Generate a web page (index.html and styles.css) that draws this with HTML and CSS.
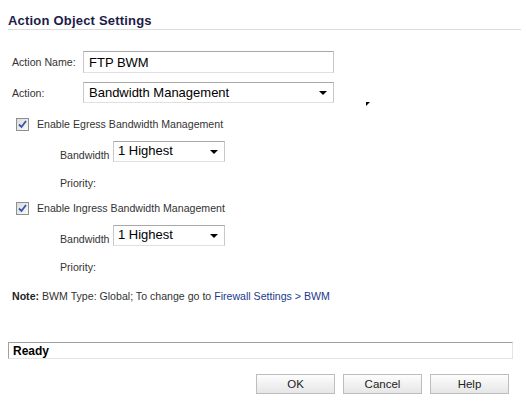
FILE: index.html
```html
<!DOCTYPE html>
<html>
<head>
<meta charset="utf-8">
<link rel="stylesheet" href="styles.css">
</head>
<body>
<div class="page">
  <div class="title"><span>Action Object Settings</span></div>
  <div class="form">
    <div class="row r1">
      <span class="label">Action Name:</span>
      <div class="field wide">FTP BWM</div>
    </div>
    <div class="row r2">
      <span class="label">Action:</span>
      <div class="field wide select">Bandwidth Management<span class="arrow"></span></div>
    </div>
    <div class="row check r3">
      <span class="cb"><svg width="9" height="9" viewBox="0 0 9 9"><path d="M1 4.5 L3.5 7 L8 1" fill="none" stroke="#3a55a8" stroke-width="1.8"/></svg></span>
      <span>Enable Egress Bandwidth Management</span>
    </div>
    <div class="row sub r4">
      <span class="sublabel">Bandwidth</span>
      <div class="field small select">1 Highest<span class="arrow"></span></div>
    </div>
    <div class="row sub plain r5"><span>Priority:</span></div>
    <div class="row check r6">
      <span class="cb"><svg width="9" height="9" viewBox="0 0 9 9"><path d="M1 4.5 L3.5 7 L8 1" fill="none" stroke="#3a55a8" stroke-width="1.8"/></svg></span>
      <span>Enable Ingress Bandwidth Management</span>
    </div>
    <div class="row sub r7">
      <span class="sublabel">Bandwidth</span>
      <div class="field small select">1 Highest<span class="arrow"></span></div>
    </div>
    <div class="row sub plain r8"><span>Priority:</span></div>
    <div class="row note r9"><b>Note:</b>&nbsp;BWM Type: Global; To change go to&nbsp;<span class="link">Firewall Settings &gt; BWM</span></div>
  </div>
  <div class="status">Ready</div>
  <div class="buttons">
    <div class="btn">OK</div>
    <div class="btn">Cancel</div>
    <div class="btn">Help</div>
  </div>
  <span class="cursor"></span>
</div>
</body>
</html>
```
FILE: styles.css
```css
html, body {
  margin: 0;
  padding: 0;
  background: #fff;
}
.page {
  position: relative;
  width: 521px;
  height: 403px;
  font-family: "Liberation Sans", Arial, sans-serif;
  font-size: 10.6px;
  color: #333;
}
.title {
  margin: 14px 0 0 8px;
  padding-bottom: 1px;
  border-bottom: 1px solid #dcdcdc;
  height: 14px;
}
.title span {
  font-weight: bold;
  font-size: 13px;
  line-height: 14px;
  color: #1c1c48;
  letter-spacing: 0.2px;
}
.form {
  padding-left: 12px;
}
.row {
  display: flex;
  align-items: center;
}
.label {
  width: 71px;
  flex: none;
}
.field {
  box-sizing: border-box;
  border: 1px solid #c8c8c8;
  border-top-color: #a8a8a8;
  border-bottom-color: #e0e0e0;
  background: #fff;
  color: #000;
  font-size: 13px;
  padding-left: 5px;
  display: flex;
  align-items: center;
  position: relative;
}
.wide {
  width: 251px;
}
.r1 { margin-top: 21px; }
.r1 .field { height: 22px; }
.r2 { margin-top: 9px; }
.r2 .field { height: 21px; }
.select .arrow {
  position: absolute;
  right: 6px;
  top: 50%;
  margin-top: -2px;
  width: 0;
  height: 0;
  border-left: 4px solid transparent;
  border-right: 4px solid transparent;
  border-top: 4px solid #000;
}
.check {
  height: 16px;
  padding-left: 4px;
}
.cb {
  box-sizing: border-box;
  width: 13px;
  height: 13px;
  border: 1px solid #8e8f8f;
  background: linear-gradient(135deg, #dcdcdc, #f8f8f8);
  display: flex;
  align-items: center;
  justify-content: center;
  margin-right: 8px;
  flex: none;
}
.r3 { margin-top: 13px; }
.sub {
  padding-left: 48px;
}
.sublabel {
  width: 53px;
  flex: none;
  padding-top: 6px;
}
.small {
  width: 112px;
  height: 21px;
  padding-left: 4px;
  font-size: 13px;
  align-items: flex-start;
  padding-top: 1px;
}
.r4 { margin-top: 9px; }
.plain { height: 16px; }
.r5 { margin-top: 13px; }
.r6 { margin-top: 9px; }
.r7 { margin-top: 9px; }
.r8 { margin-top: 13px; }
.note {
  height: 16px;
  margin-top: 13px;
  color: #333;
}
.note b {
  color: #222;
}
.link {
  color: #1b3a8c;
}
.status {
  box-sizing: border-box;
  margin: 38px 8px 0 8px;
  height: 17px;
  border: 1px solid #e4e4e4;
  border-top-color: #a0a0a0;
  border-left-color: #a0a0a0;
  font-weight: bold;
  font-size: 12px;
  color: #000;
  padding-left: 4px;
  line-height: 16px;
}
.buttons {
  display: flex;
  justify-content: flex-end;
  gap: 8px;
  margin: 15px 12px 0 0;
}
.btn {
  box-sizing: border-box;
  width: 79px;
  height: 20px;
  border: 1px solid #bdbdbd;
  background: linear-gradient(#fdfdfd, #e6e6e6);
  color: #222;
  font-size: 11.5px;
  display: flex;
  align-items: center;
  justify-content: center;
}
.cursor {
  position: absolute;
  left: 366px;
  top: 88px;
  width: 0;
  height: 0;
  border-top: 4px solid #000;
  border-right: 4px solid transparent;
}
```
